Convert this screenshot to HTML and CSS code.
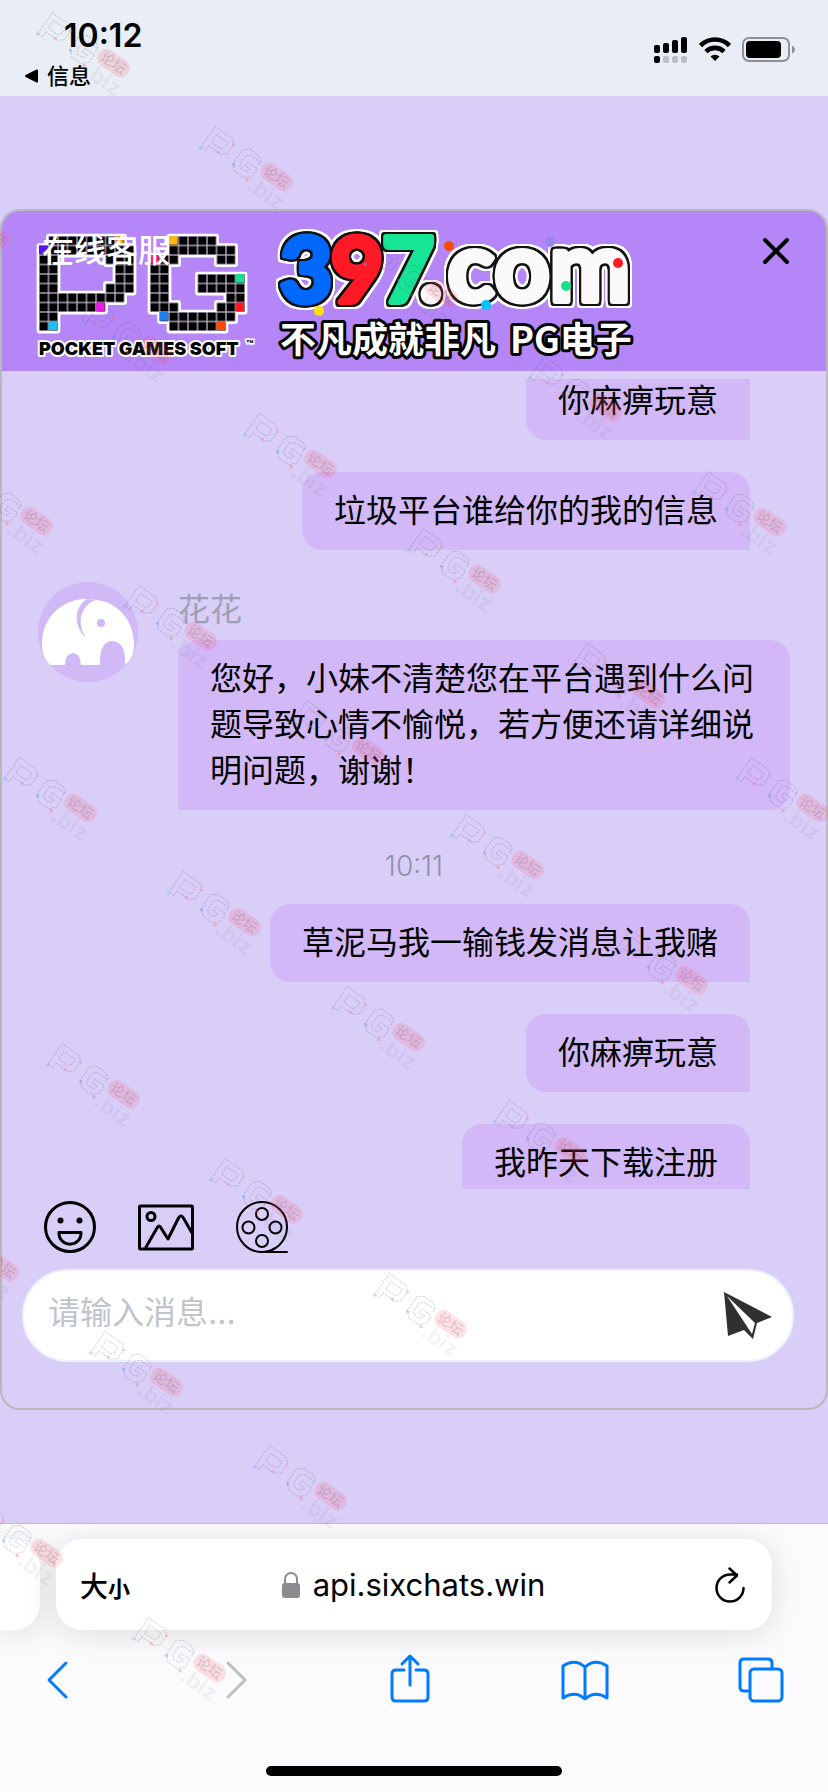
FILE: index.html
```html
<!DOCTYPE html>
<html lang="zh-CN">
<head>
  <meta charset="UTF-8" />
  <meta name="viewport" content="width=device-width, initial-scale=1" />
  <title>在线客服</title>
  <link rel="stylesheet" href="styles.css">
</head>
<body>

<header class="status-bar">
  <div class="status-left">
    <div class="clock">10:12</div>
    <a class="back-app" href="#">
      <svg width="16" height="16" viewBox="0 0 16 16"><path d="M2 8L13 2.500V13.500Z" stroke="#000" stroke-width="2" stroke-linejoin="round"/></svg>
      信息
    </a>
  </div>
  <div class="status-icons">
    <svg width="34" height="28" viewBox="0 0 34 28">
      <rect x="0" y="9" width="6" height="8" rx="2"/><rect x="9" y="7" width="6" height="10" rx="2"/>
      <rect x="18" y="4" width="6" height="13" rx="2"/><rect x="27" y="1" width="6" height="16" rx="2"/>
      <rect x="0" y="20" width="6" height="7" rx="2"/>
      <g fill="#bdbec3"><rect x="9" y="20" width="6" height="7" rx="2"/><rect x="18" y="20" width="6" height="7" rx="2"/><rect x="27" y="20" width="6" height="7" rx="2"/></g>
    </svg>
    <svg width="32" height="28" viewBox="0 0 32 28">
      <g fill="none" stroke="#000" stroke-width="4.600"><path d="M1.500 9.500A20.500 20.500 0 0 1 30.500 9.500"/><path d="M7 15.600A12.700 12.700 0 0 1 25 15.600"/></g>
      <path d="M16 25L11.500 20.500A6.500 6.500 0 0 1 20.500 20.500Z"/>
    </svg>
    <svg width="54" height="28" viewBox="0 0 54 28">
      <rect x="1" y="2" width="46" height="23" rx="6" fill="none" stroke="#8f9095" stroke-width="2"/>
      <rect x="4" y="5" width="35" height="17" rx="4"/>
      <path d="M50 9.500q3 1.500 3 4t-3 4z" fill="#8f9095"/>
    </svg>
  </div>
</header>

<main class="page">
  <section class="chat">
    <div class="chat-header">
      <svg class="banner" width="640" height="160" viewBox="0 0 640 160">
        <defs>
          <pattern id="cell" width="1" height="1" patternUnits="userSpaceOnUse">
            <rect width="1" height="1" fill="#b9adc6"/><rect x=".07" y=".07" width=".86" height=".86" fill="#000"/>
          </pattern>
        </defs>
        <g transform="translate(37 25) scale(9.500)" fill="url(#cell)" fill-rule="evenodd">
          <path d="M1 0H9V1H10V6H9V7H7V8H2V10H0V1H1ZM2 2V6H7V5H8V3H7V2Z" stroke="#fff" stroke-width=".5" stroke-linejoin="round" paint-order="stroke"/>
          <rect x="8" width=".9" height=".9" fill="#ff8a1e"/><rect y="1" width=".9" height=".9" fill="#5b12f0"/>
          <rect x="6" y="7" width=".9" height=".9" fill="#e81ee0"/><rect x="1" y="9" width=".9" height=".9" fill="#1cc0ee"/>
        </g>
        <g transform="translate(148 25) scale(9.500)" fill="url(#cell)">
          <path d="M2 0H7V1H9V3H7V2H3V3H2V7H3V8H7V7H8V6H5V4H10V8H9V9H8V10H2V9H1V8H0V2H2Z" stroke="#fff" stroke-width=".5" stroke-linejoin="round" paint-order="stroke"/>
          <rect x="2" width=".9" height=".9" fill="#ffb514"/><rect y="2" width=".9" height=".9" fill="#ff1a6c"/>
          <rect x="9" y="4" width=".9" height=".9" fill="#16e08c"/><rect x="9" y="7" width=".9" height=".9" fill="#ff1a22"/>
          <rect x="1" y="8" width=".9" height=".9" fill="#1e82ec"/><rect x="7" y="9" width=".9" height=".9" fill="#ff4a00"/>
        </g>
        <text class="maker" x="37" y="144">POCKET GAMES SOFT</text>
        <text class="tm" x="244" y="138">™</text>

        <g class="domain">
          <text class="digits" x="304 355 406" y="91"><tspan class="blue">3</tspan><tspan class="red">9</tspan><tspan class="green">7</tspan></text>
          <text class="letters" x="429 469 520 588" y="90">.com</text>
        </g>
        <circle cx="447" cy="35" r="5" fill="#ff4a00"/><circle cx="317" cy="100" r="5" fill="#ffe000"/>
        <circle cx="484" cy="94" r="5" fill="#00c4ff"/><circle cx="564" cy="75" r="5" fill="#16e08c"/>
        <circle cx="616" cy="52" r="5" fill="#ff1a22"/><circle cx="548" cy="31" r="5" fill="#9b85ec"/>
        <text class="slogan" x="278" y="142">不凡成就非凡</text>
        <text class="slogan" x="508" y="142">PG电子</text>
      </svg>
      <h1>在线客服</h1>
      <button class="close" aria-label="关闭">
        <svg width="28" height="28" viewBox="0 0 28 28" fill="none" stroke="#000" stroke-width="4" stroke-linecap="round"><path d="M3 3L25 25M25 3L3 25"/></svg>
      </button>
    </div>

    <div class="messages">
      <div class="message-list">
        <div class="bubble sent">你麻痹玩意</div>
        <div class="bubble sent">垃圾平台谁给你的我的信息</div>
        <div class="received-row">
          <svg class="avatar" width="100" height="100" viewBox="0 0 100 100">
            <circle cx="50" cy="50" r="50" fill="#d1b8f7"/>
            <path d="M12 83Q4 75 4 61C4 36 24 17 48 17Q54 17 58 18C80 20 96 39 96 62Q96 76 87 83Q88 59 74 59Q61 60 62 83H43Q42 71 35 71Q27 72 27 83Z" fill="#fff"/>
            <path d="M49 17C36 25 35 43 48 56C39 42 41 24 58 18Z" fill="#d1b8f7"/>
            <circle cx="63" cy="41" r="4" fill="#d1b8f7"/>
          </svg>
          <div class="received-body">
            <div class="sender">花花</div>
            <div class="bubble received">您好，小妹不清楚您在平台遇到什么问题导致心情不愉悦，若方便还请详细说明问题，谢谢！</div>
          </div>
        </div>
        <div class="time">10:11</div>
        <div class="bubble sent">草泥马我一输钱发消息让我赌</div>
        <div class="bubble sent">你麻痹玩意</div>
        <div class="bubble sent">我昨天下载注册</div>
      </div>
    </div>

    <div class="tools">
      <button aria-label="表情">
        <svg width="56" height="56" viewBox="0 0 56 56" fill="none" stroke="#000" stroke-width="3">
          <circle cx="28" cy="28" r="24.500"/><path d="M17 33.500H39C39.500 49 16.500 49 17 33.500Z" stroke-linejoin="round"/>
          <g fill="#000" stroke="none"><circle cx="18.500" cy="21.500" r="3"/><circle cx="37.500" cy="21.500" r="3"/></g>
        </svg>
      </button>
      <button aria-label="图片">
        <svg width="56" height="56" viewBox="0 0 56 56" fill="none" stroke="#000" stroke-width="3" stroke-linejoin="round">
          <rect x="1.500" y="7" width="53" height="43" rx="1"/><circle cx="13" cy="17.500" r="4"/>
          <path d="M7.500 49L19 29Q21 25 23 29L30 40L40 20Q43 14 46 20L54 34"/>
        </svg>
      </button>
      <button aria-label="视频">
        <svg width="56" height="56" viewBox="0 0 56 56" fill="none" stroke="#000" stroke-width="2" stroke-linecap="round">
          <circle cx="28" cy="28" r="25"/><circle cx="28" cy="15" r="6"/><circle cx="28" cy="42" r="6"/><circle cx="14.500" cy="28.500" r="6"/><circle cx="41.500" cy="28.500" r="6"/>
          <path d="M28 53H53M32 53Q37 52 41 49"/>
        </svg>
      </button>
    </div>

    <form class="composer">
      <input type="text" placeholder="请输入消息..." aria-label="请输入消息" />
      <button type="button" class="send" aria-label="发送">
        <svg width="50" height="50" viewBox="0 0 50 50" fill="#303030"><path d="M1 1L49 26L34 32L30 48L21 39L5 45ZM4 5L29 43L32 32Z" fill-rule="evenodd"/></svg>
      </button>
    </form>
  </section>
</main>

<footer class="browser">
  <div class="tabs">
    <div class="tab-prev"></div>
    <div class="address">
      <button class="text-size" aria-label="文字大小">大<small>小</small></button>
      <a class="url" href="#">
        <svg width="20" height="28" viewBox="0 0 20 28"><rect x="1" y="12" width="18" height="15" rx="3" fill="#8a8a8f"/><path d="M4 13V8a6 6 0 0 1 12 0V13" fill="none" stroke="#8a8a8f" stroke-width="2"/></svg>
        api.sixchats.win
      </a>
      <button class="reload" aria-label="刷新">
        <svg width="32" height="38" viewBox="0 0 32 38" fill="none" stroke="#000" stroke-width="2.500" stroke-linecap="round" stroke-linejoin="round"><path d="M29.500 22A13.500 13.500 0 1 1 16 8.500H23M15.500 2.500L23 9.500L15.500 16.500"/></svg>
      </button>
    </div>
  </div>
  <nav class="toolbar">
    <button aria-label="后退"><svg width="60" height="60" viewBox="0 0 60 60"><path d="M39 13L22 30L39 47"/></svg></button>
    <button aria-label="前进" disabled><svg width="60" height="60" viewBox="0 0 60 60"><path d="M25 13L42 30L25 47"/></svg></button>
    <button aria-label="分享"><svg width="60" height="60" viewBox="0 0 60 60"><path d="M25 20H17Q13 20 13 24V47Q13 51 17 51H45Q49 51 49 47V24Q49 20 45 20H37M31 35V7M23 14L31 6L39 14"/></svg></button>
    <button aria-label="书签"><svg width="60" height="60" viewBox="0 0 60 60"><path d="M30 17Q20 8 8 16V48Q20 40 30 49Q40 40 52 48V16Q40 8 30 17V48"/></svg></button>
    <button aria-label="标签页"><svg width="60" height="60" viewBox="0 0 60 60"><rect x="19" y="19" width="32" height="32" rx="4"/><path d="M18 41H13Q9 41 9 37V13Q9 9 13 9H37Q41 9 41 13V18"/></svg></button>
  </nav>
  <div class="home-indicator"></div>
</footer>

<!-- repeated site mark over the whole screen -->
<svg class="watermark" aria-hidden="true">
  <defs>
    <g id="mark">
      <g transform="translate(1 20) rotate(35)">
        <g transform="scale(1.150)">
          <g fill="none" stroke="#504868" stroke-opacity=".2" stroke-width="1" stroke-dasharray="2 1">
            <path d="M2 0V-22H20L24 -18V-9L20 -5H7V0ZM7 -9H17L19 -12V-17H7Z"/>
            <path d="M52 -16V-20L48 -23H38L33 -19V-5L38 0H48L53 -5V-13H43V-9H48L46 -5H40L38 -8V-16L41 -19H52"/>
          </g>
          <g fill-opacity=".35"><circle cx="24" cy="-18" r="1.500" fill="#ff9090"/><circle cx="2" cy="1" r="1.500" fill="#70c0ff"/><circle cx="17" cy="-5" r="1.500" fill="#ff70a0"/><circle cx="34" cy="-4" r="1.500" fill="#5090ff"/><circle cx="51" cy="0" r="1.500" fill="#ff6070"/></g>
        </g>
        <rect x="64" y="-28" width="35" height="18" rx="8" fill="#ff4860" fill-opacity=".16"/>
        <text class="mark-cn" x="67" y="-14">论坛</text>
        <text class="mark-biz" x="62" y="8">.biz</text>
      </g>
    </g>
  </defs>
  <use href="#mark" x="35" y="12"/><use href="#mark" x="198" y="126"/><use href="#mark" x="-86" y="184"/>
  <use href="#mark" x="363" y="242"/><use href="#mark" x="78" y="299"/><use href="#mark" x="527" y="356"/>
  <use href="#mark" x="242" y="413"/><use href="#mark" x="-42" y="470"/><use href="#mark" x="691" y="471"/>
  <use href="#mark" x="406" y="528"/><use href="#mark" x="122" y="585"/><use href="#mark" x="570" y="643"/>
  <use href="#mark" x="290" y="700"/><use href="#mark" x="2" y="757"/><use href="#mark" x="734" y="757"/>
  <use href="#mark" x="449" y="814"/><use href="#mark" x="166" y="871"/><use href="#mark" x="613" y="929"/>
  <use href="#mark" x="330" y="986"/><use href="#mark" x="45" y="1043"/><use href="#mark" x="492" y="1100"/>
  <use href="#mark" x="208" y="1158"/><use href="#mark" x="-76" y="1216"/><use href="#mark" x="372" y="1273"/>
  <use href="#mark" x="88" y="1331"/><use href="#mark" x="252" y="1445"/><use href="#mark" x="-32" y="1502"/>
  <use href="#mark" x="131" y="1617"/>
</svg>

</body>
</html>
```
FILE: styles.css
```css
* {
  box-sizing: border-box;
}
body {
  margin: 0;
  height: 100vh;
  display: flex;
  flex-direction: column;
  position: relative;
  overflow: hidden;
  background: #d9cef8;
  color: #000;
  font-family: Inter, "Noto Sans CJK SC", sans-serif;
}
button {
  padding: 0;
  border: none;
  background: none;
  color: inherit;
  font: inherit;
  cursor: pointer;
}
a {
  color: inherit;
  text-decoration: none;
}
svg {
  display: block;
}

/* status bar */
.status-bar {
  height: 96px;
  flex-shrink: 0;
  display: flex;
  justify-content: space-between;
  padding: 16px 32px 0 24px;
  background: #e9edf5;
}
.clock {
  padding-left: 40px;
  font-size: 32px;
  line-height: 40px;
  font-weight: 600;
}
.back-app {
  display: flex;
  align-items: center;
  gap: 7px;
  font-size: 22px;
  line-height: 40px;
  font-weight: 500;
}
.status-icons {
  display: flex;
  gap: 11px;
  padding-top: 20px;
}

/* chat window */
.page {
  flex: 1;
  min-height: 0;
  display: flex;
  padding: 113px 0;
}
.chat {
  flex: 1;
  display: flex;
  flex-direction: column;
  overflow: hidden;
  border: 2px solid #b9b8bd;
  border-radius: 20px;
}
.chat-header {
  height: 160px;
  flex-shrink: 0;
  display: grid;
  grid-template-columns: 1fr auto;
  align-items: start;
  background: #b586f7;
}
.banner, .chat-header h1 {
  grid-row: 1;
  grid-column: 1;
}
.chat-header h1 {
  margin: 16px 0 0 40px;
  font-size: 32px;
  line-height: 48px;
  font-weight: 500;
  color: #fff;
}
.close {
  margin: 26px 36px 0 0;
}
.maker {
  font: 900 18px Inter, sans-serif;
  stroke: #fff;
  stroke-width: 4px;
  stroke-linejoin: round;
  paint-order: stroke;
}
.tm {
  font: 700 12px Inter, sans-serif;
  stroke: #fff;
  stroke-width: 3px;
  paint-order: stroke;
}
/* black edge, then a white halo round it */
.domain {
  font-family: Lato, sans-serif;
  font-weight: 700;
  text-anchor: middle;
  fill: #fafafa;
  stroke: #fafafa;
  stroke-width: 6px;
  stroke-linejoin: round;
  filter: drop-shadow(2px 0 #111) drop-shadow(-2px 0 #111) drop-shadow(0 2px #111) drop-shadow(0 -2px #111)
    drop-shadow(2px 0 #fff) drop-shadow(-2px 0 #fff) drop-shadow(0 2px #fff) drop-shadow(0 -2px #fff);
}
.digits {
  font-size: 90px;
}
.letters {
  font-size: 96px;
}
.blue {
  fill: #0068ff;
  stroke: #0068ff;
}
.red {
  fill: #ff1a26;
  stroke: #ff1a26;
}
.green {
  fill: #16e596;
  stroke: #16e596;
}
.slogan {
  font: 700 36px "Noto Sans CJK SC", sans-serif;
  fill: #fff;
  stroke: #000;
  stroke-width: 6px;
  stroke-linejoin: round;
  paint-order: stroke;
}

/* messages */
.messages {
  flex: 1;
  min-height: 0;
  margin-top: 8px;
  overflow: hidden;
}
.message-list {
  display: flex;
  flex-direction: column;
  margin-top: -17px;
  padding: 0 36px;
}
.bubble {
  padding: 16px 32px;
  font-size: 32px;
  line-height: 46px;
  background: #d2b8f7;
}
.sent {
  align-self: flex-end;
  margin: 0 40px 32px 0;
  border-radius: 20px 20px 0 20px;
}
.received {
  border-radius: 20px 20px 20px 0;
}
.received-row {
  display: flex;
  gap: 40px;
  margin-bottom: 32px;
}
.avatar {
  flex-shrink: 0;
}
.sender {
  margin-bottom: 2px;
  font-size: 32px;
  line-height: 56px;
  color: #9da0b6;
}
.time {
  margin-bottom: 14px;
  font-size: 28px;
  line-height: 48px;
  font-weight: 300;
  text-align: center;
  color: #8f91a6;
}

/* input area */
.tools {
  display: flex;
  gap: 40px;
  padding: 10px 40px 14px;
}
.composer {
  display: flex;
  align-items: center;
  height: 93px;
  flex-shrink: 0;
  margin: 0 32px 46px 20px;
  padding: 0 19px 0 24px;
  border: 2px solid #ecf1fc;
  border-radius: 46px;
  background: #fff;
}
.composer input {
  flex: 1;
  min-width: 0;
  height: 64px;
  padding: 0 0 6px;
  border: none;
  outline: none;
  background: none;
  font: inherit;
  font-size: 32px;
}
.composer input::placeholder {
  color: #c0c4cc;
}

/* browser bar */
.browser {
  flex-shrink: 0;
  border-top: 1px solid #c4bdd2;
  background: #fbfbfe;
}
.tabs {
  display: flex;
  gap: 16px;
  padding: 15px 56px 0 0;
}
.tab-prev, .address {
  height: 91px;
  background: #fff;
  box-shadow: 0 4px 32px rgba(0, 0, 0, 0.12);
}
.tab-prev {
  width: 40px;
  border-radius: 0 26px 26px 0;
}
.address {
  flex: 1;
  display: grid;
  grid-template-columns: 1fr auto 1fr;
  align-items: center;
  padding: 0 26px 0 24px;
  border-radius: 26px;
}
.text-size {
  justify-self: start;
  font-size: 28px;
  font-weight: 500;
}
.text-size small {
  font-size: 22px;
  font-weight: 700;
}
.url {
  display: flex;
  align-items: center;
  gap: 12px;
  font-size: 31px;
}
.reload {
  justify-self: end;
}
.toolbar {
  display: flex;
  justify-content: space-between;
  padding: 20px 37px 0 27px;
}
.toolbar svg {
  fill: none;
  stroke: #007aff;
  stroke-width: 3px;
  stroke-linecap: round;
  stroke-linejoin: round;
}
.toolbar button:disabled svg {
  stroke: #bfbfc2;
}
.home-indicator {
  width: 296px;
  height: 10px;
  margin: 56px auto 16px;
  border-radius: 5px;
  background: #000;
}

.watermark {
  position: absolute;
  top: 0;
  left: 0;
  width: 100%;
  height: 100%;
  pointer-events: none;
}
.mark-cn {
  font: 500 14px "Noto Sans CJK SC", sans-serif;
  fill: #806070;
  fill-opacity: 0.25;
}
.mark-biz {
  font: 700 22px Inter, sans-serif;
  fill: #504868;
  fill-opacity: 0.08;
}
```
